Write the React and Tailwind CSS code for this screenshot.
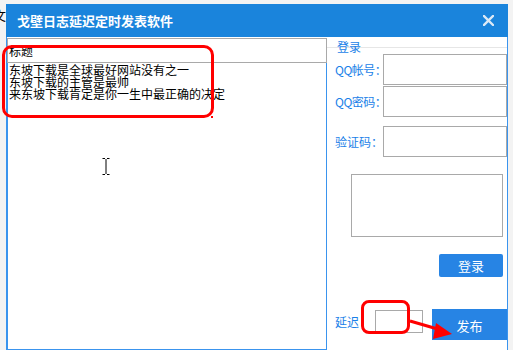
import React from "react";

export default function App() {
  return (
    <div className="relative w-[513px] h-[350px] overflow-hidden bg-[#f3f3f3] font-['Noto_Sans_CJK_SC',sans-serif] text-[12px] text-black">
      {/* bit of the window behind */}
      <span className="absolute left-[-7px] top-[7px] text-[13px] leading-[16px]">文</span>

      <div className="pl-[6px] pt-[4px]">
        <div className="w-[502px] bg-white">
          {/* title bar */}
          <div className="h-[33px] bg-[#1a84dc] flex items-center justify-between pl-[11px] pr-[14px]">
            <span className="text-white font-bold text-[13px] leading-[16px]">戈壁日志延迟定时发表软件</span>
            <svg width="11" height="11" viewBox="0 0 11 11">
              <path d="M1 1 L10 10 M10 1 L1 10" stroke="#dce9f6" strokeWidth="2.4" strokeLinecap="square" />
            </svg>
          </div>

          <div className="flex h-[313px] border-x border-[#3a94ee] pt-[1px]">
            {/* left: title + content */}
            <div className="w-[320px] flex flex-col">
              <div className="h-[25px] border border-[#a9a9a9] px-[1px] leading-[23px]">标题</div>
              <div className="flex-1 border-x border-b border-[#3a94ee] px-[1px] pt-[1px] leading-[12px]">
                <div>东坡下载是全球最好网站没有之一</div>
                <div>东坡下载的主管是最帅</div>
                <div>来东坡下载肯定是你一生中最正确的决定</div>
              </div>
            </div>

            {/* right: login */}
            <div className="flex-1 flex flex-col text-[#1a7fe8]">
              <div className="h-[16px] grid">
                <div className="col-start-1 row-start-1 self-start mt-[9px] h-px bg-[#e6e6e6]" />
                <div className="col-start-1 row-start-1 self-start mt-[3px] pl-[10px] leading-[12px]">登录</div>
              </div>

              <div className="flex items-center h-[31px]">
                <span className="flex-none w-[48px] ml-[8px] leading-[14px] whitespace-nowrap tracking-[-0.5px]">QQ帐号：</span>
                <div className="flex-1 h-[31px] border border-[#a9a9a9]" />
              </div>
              <div className="flex items-center h-[31px] mt-[1px]">
                <span className="flex-none w-[48px] ml-[8px] leading-[14px] whitespace-nowrap tracking-[-0.5px]">QQ密码：</span>
                <div className="flex-1 h-[31px] border border-[#a9a9a9]" />
              </div>
              <div className="flex items-center h-[31px] mt-[9px]">
                <span className="flex-none w-[48px] ml-[8px] leading-[14px] whitespace-nowrap">验证码：</span>
                <div className="flex-1 h-[31px] border border-[#a9a9a9]" />
              </div>

              <div className="mt-[17px] ml-[24px] w-[152px] h-[63px] border border-[#a9a9a9]" />

              <div className="mt-[17px] ml-[112px] w-[64px] h-[23px] rounded-[2px] bg-[#2784e4] text-white text-[13px] flex items-center justify-center">
                登录
              </div>

              <div className="mt-[32px] flex items-start h-[31px]">
                <span className="ml-[8px] w-[40px] mt-[6px] leading-[14px]">延迟</span>
                <div className="mt-[1px] w-[48px] h-[23px] border border-[#a9a9a9]" />
                <div className="ml-[9px] flex-1 h-[31px] bg-[#2784e4] text-white text-[13px] flex items-center justify-center pt-[2px]">
                  发布
                </div>
              </div>
            </div>
          </div>
        </div>
      </div>

      {/* red annotations */}
      <div className="absolute left-[2px] top-[45px] w-[212px] h-[73px] border-[3px] border-[#ff0000] rounded-[10px]" />
      <div className="absolute left-[211px] top-[116px] w-[2px] h-[2px] bg-[#ff0000]" />
      <div className="absolute left-[361px] top-[300px] w-[49px] h-[34px] border-[3px] border-[#ff0000] rounded-[8px]" />
      <svg className="absolute left-[405px] top-[315px]" width="50" height="28" viewBox="0 0 50 28">
        <path d="M5 6 L36 15" stroke="#ff0000" strokeWidth="3" />
        <path d="M31 8 L47 19 L28 24 Z" fill="#ff0000" />
      </svg>

      {/* text cursor */}
      <svg className="absolute left-[102px] top-[158px]" width="8" height="17" viewBox="0 0 8 17">
        <path d="M0.5 0.5 H3 M5 0.5 H7.5 M4 1 V16 M0.5 16.5 H3 M5 16.5 H7.5" stroke="#000" strokeWidth="1" />
      </svg>
    </div>
  );
}
